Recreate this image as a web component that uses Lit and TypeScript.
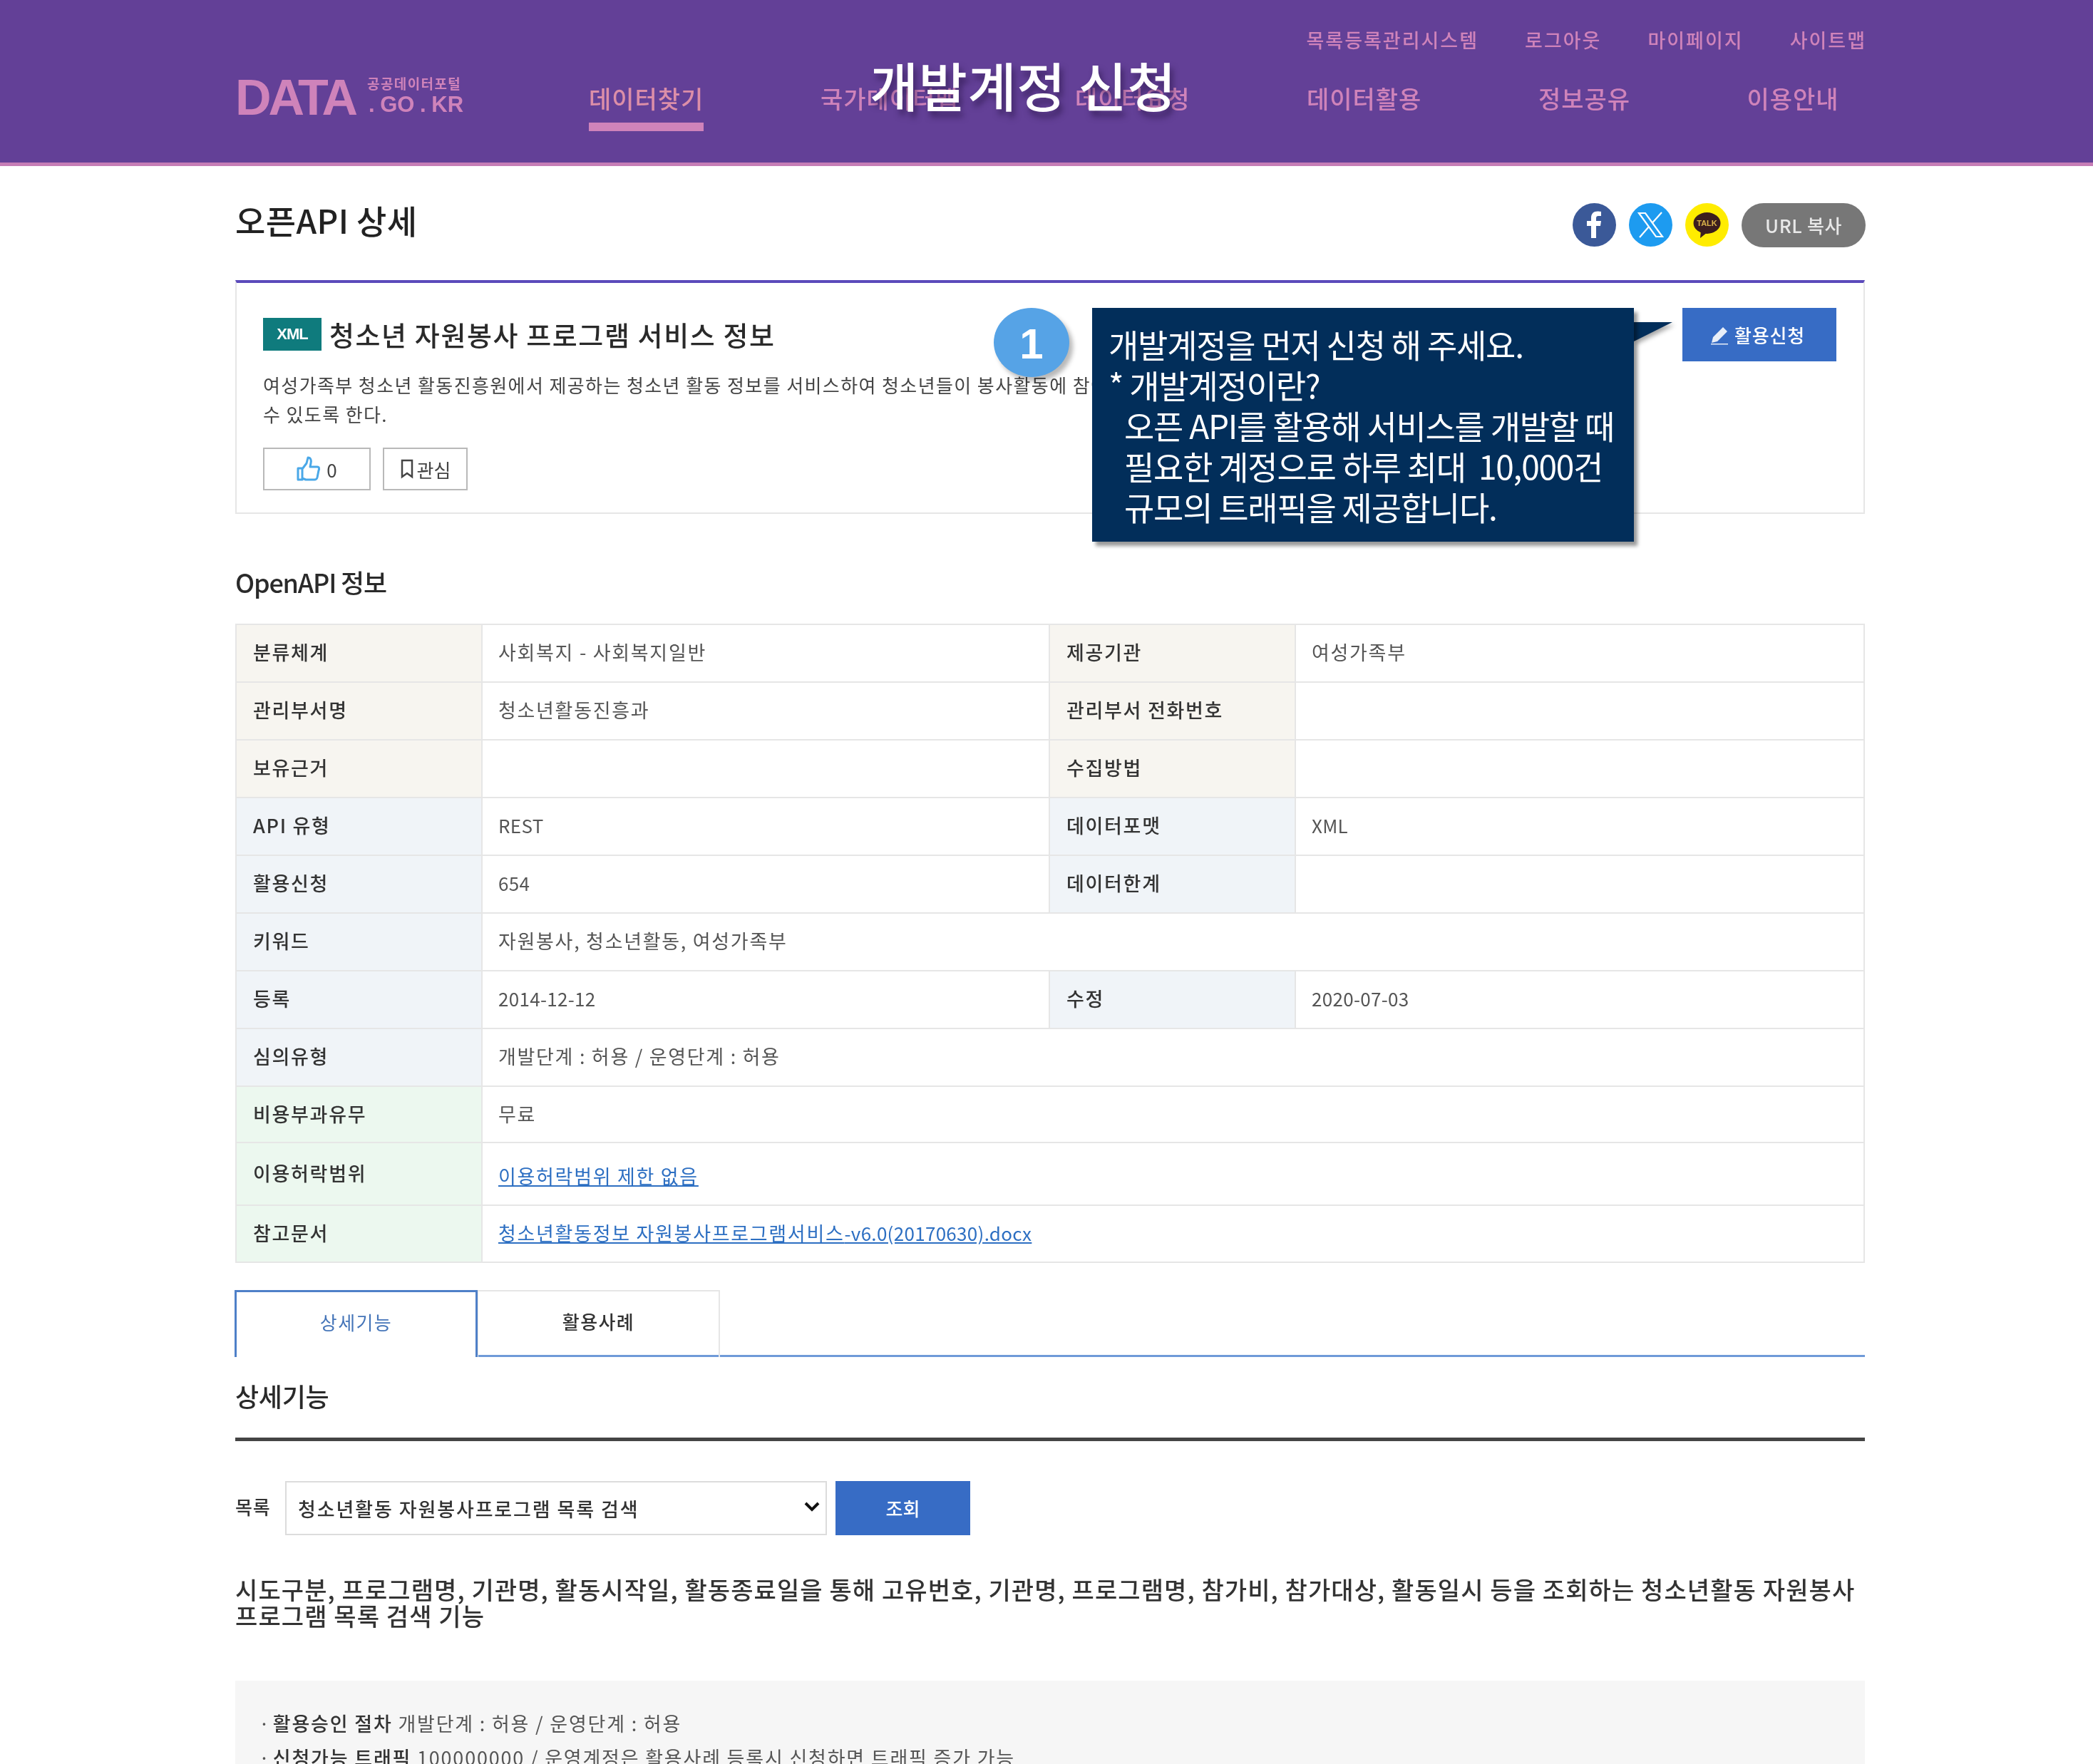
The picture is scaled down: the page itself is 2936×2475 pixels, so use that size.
import { LitElement, html, css, svg } from "lit";
import { customElement } from "lit/decorators.js";

type Cell = [string, unknown];
interface Row { tone: string; tall?: string; cells: Cell[]; }

const link = (ko: string, lat = "") => html`<a class="link" href="#">${ko}<span class="lat">${lat}</span></a>`;
const lat = (t: string) => html`<span class="lat">${t}</span>`;

const ROWS: Row[] = [
  { tone: "sand", cells: [["분류체계", "사회복지 - 사회복지일반"], ["제공기관", "여성가족부"]] },
  { tone: "sand", cells: [["관리부서명", "청소년활동진흥과"], ["관리부서 전화번호", ""]] },
  { tone: "sand", cells: [["보유근거", ""], ["수집방법", ""]] },
  { tone: "blue", cells: [["API 유형", lat("REST")], ["데이터포맷", lat("XML")]] },
  { tone: "blue", cells: [["활용신청", lat("654")], ["데이터한계", ""]] },
  { tone: "blue", cells: [["키워드", "자원봉사, 청소년활동, 여성가족부"]] },
  { tone: "blue", cells: [["등록", lat("2014-12-12")], ["수정", lat("2020-07-03")]] },
  { tone: "blue", cells: [["심의유형", "개발단계 : 허용 / 운영단계 : 허용"]] },
  { tone: "green", tall: "h79", cells: [["비용부과유무", "무료"]] },
  { tone: "green", tall: "h88", cells: [["이용허락범위", link("이용허락범위 제한 없음")]] },
  { tone: "green", tall: "h80", cells: [["참고문서", link("청소년활동정보 자원봉사프로그램서비스", "-v6.0(20170630).docx")]] },
];

const fbIcon = svg`<path fill="#fff" d="M33 49V32h6l1-7h-7v-4c0-2 1-3 3-3h4v-6c-1 0-3-.4-5-.4-5.500 0-9 3.300-9 9V25h-6v7h6v17z"/>`;
const xIcon = svg`<path fill="none" stroke="#fff" stroke-width="2.200" d="M14 14h9l24 33h-9zM46 13 33.500 27M28 33 15 48"/>`;

@customElement("app-root")
export class AppRoot extends LitElement {
  static styles = css`
    :host { display: block; }
    * { box-sizing: border-box; }
    .page {
      position: relative; height: 2475px; overflow: hidden; background: #fff;
      font-family: "Noto Sans CJK KR", "Liberation Sans", sans-serif; color: #333;
      filter: blur(0.7px);
    }
    /* header */
    .hd { height: 233px; background: #634097; border-bottom: 5px solid #c67db6; padding: 0 320px 0 330px; color: #cf83ba; }
    .util { display: flex; justify-content: flex-end; gap: 65px; height: 106px; padding-top: 38px; margin-right: -2px; font-size: 27px; line-height: 36px; letter-spacing: 2px; font-weight: 500; }
    .mainrow { display: flex; align-items: flex-start; }
    .logo { width: 496px; display: flex; gap: 17px; margin-top: -4px; font-family: "Liberation Sans", sans-serif; font-weight: 700; }
    .logo-big { font-size: 70px; line-height: 70px; letter-spacing: -4px; }
    .logo-side { display: flex; flex-direction: column; padding-top: 3px; }
    .logo-sm { font-family: "Noto Sans CJK KR", sans-serif; font-size: 19px; line-height: 24px; letter-spacing: 1.400px; white-space: nowrap; }
    .logo-kr { font-size: 31px; line-height: 30px; margin-top: 3px; padding-left: 2px; white-space: nowrap; word-spacing: -1px; }
    .nav { display: flex; gap: 163.500px; font-size: 34px; line-height: 48px; font-weight: 500; letter-spacing: 1px; }
    .nav span { display: block; height: 78px; padding-top: 8px; white-space: nowrap; }
    .nav .on { border-bottom: 12px solid #cf83ba; color: #dc8ea8; }
    .bigtitle {
      position: absolute; left: 1220px; top: 66px; font-size: 74px; line-height: 104px; font-weight: 500; color: #fff;
      letter-spacing: .7px; white-space: nowrap; text-shadow: 4px 8px 8px rgba(40, 20, 70, .6);
    }
    /* body */
    .wrap { width: 2286px; margin-left: 330px; }
    .titlerow { display: flex; justify-content: space-between; height: 160px; padding-top: 43px; }
    h1 { margin: 0; font-size: 46px; line-height: 64px; font-weight: 500; color: #222; letter-spacing: .4px; }
    .share { display: flex; align-items: flex-start; gap: 18px; margin: 9px -1px 0 0; }
    .share svg { width: 61px; height: 61px; display: block; }
    .urlbtn { width: 174px; height: 62px; border-radius: 31px; background: #777; color: #e8e8e8; font-size: 26px; font-weight: 500; line-height: 62px; text-align: center; letter-spacing: .6px; }
    .card { height: 328px; border: 2px solid #e6e6e6; border-top: 4px solid #5b4abb; padding: 49px 38px 0 37px; position: relative; }
    .card-top { display: flex; align-items: center; gap: 11px; height: 46px; }
    .badge { width: 82px; height: 46px; background: #0f7b7d; color: #fff; font: 700 22px/46px "Liberation Sans", sans-serif; text-align: center; letter-spacing: -1px; }
    .card-title { font-size: 38px; font-weight: 500; line-height: 46px; color: #2a2a2a; letter-spacing: 1.600px; white-space: nowrap; }
    .desc { margin: 27px 0 0; font-size: 26px; line-height: 41px; color: #444; letter-spacing: 1.400px; white-space: nowrap; }
    .acts { display: flex; gap: 17px; margin-top: 27px; }
    .act { height: 60px; border: 2px solid #b9b9b9; background: #fff; display: flex; align-items: center; justify-content: center; gap: 8px; font-size: 26px; color: #444; }
    .act.like { width: 151px; }
    .act.fav { width: 119px; gap: 4px; }
    .apply { position: absolute; right: 38px; top: 35px; width: 216px; height: 75px; background: #376cc5; color: #fff; display: flex; align-items: center; justify-content: center; gap: 7px; font-size: 26px; font-weight: 500; letter-spacing: .8px; padding-right: 6px; }
    .num { position: absolute; left: 1394px; top: 432px; width: 106px; height: 97px; border-radius: 50%; background: #56a3e6; color: #fff; font: 700 60px/102px "Liberation Sans", sans-serif; text-align: center; box-shadow: 5px 6px 6px rgba(0,0,0,.28); }
    .tip { position: absolute; left: 1532px; top: 432px; width: 760px; height: 328px; background: #022e5a; color: #fff; padding: 22px 0 0 23px; font-size: 46px; line-height: 57px; letter-spacing: -1.250px; box-shadow: 5px 6px 5px rgba(0,0,0,.4); white-space: nowrap; }
    .tip div.in { padding-left: 22px; }
    .tail { position: absolute; left: 2292px; top: 452px; width: 56px; height: 32px; display: block; filter: drop-shadow(3px 4px 3px rgba(0,0,0,.35)); }
    h2 { margin: 0; font-size: 36px; font-weight: 500; color: #2a2a2a; line-height: 48px; letter-spacing: -1.200px; }
    .h-info { padding-top: 71px; height: 154px; }
    table { width: 2286px; table-layout: fixed; border-collapse: collapse; border: 2px solid #e6e6e6; }
    th, td { height: 81px; border: 2px solid #e6e6e6; font-size: 27px; line-height: 34px; padding: 0 0 3px 22px; text-align: left; letter-spacing: 1.700px; }
    th { font-weight: 500; color: #333; padding-left: 23px; }
    td { font-weight: 400; color: #555; }
    th.sand { background: #f7f5f0; }
    th.blue { background: #f0f4f8; }
    th.green { background: #ecf8ef; }
    .h79 th, .h79 td { height: 79px; padding-bottom: 1px; }
    .h88 th, .h88 td { height: 88px; }
    .h88 td { padding: 5px 0 0 22px; }
    .h80 th, .h80 td { height: 80px; }
    .link { color: #2d6fc2; text-decoration: underline; }
    .lat { font-size: 26px; letter-spacing: .3px; }
    .tabs { display: flex; margin-top: 38px; height: 94px; border-bottom: 3px solid #6f9ad8; }
    .tab { width: 341px; height: 94px; text-align: center; font-size: 26px; line-height: 84px; letter-spacing: 1.400px; border: 2px solid #e6e6e6; border-bottom: 0; font-weight: 500; color: #333; }
    .tab.on { border: 3px solid #4f80c8; border-bottom: 0; height: 94px; background: #fff; color: #4474b8; font-weight: 400; position: relative; z-index: 1; margin-left: -1px; }
    .tab + .tab { margin-left: -1px; }
    .h-detail { padding-top: 30px; height: 118px; border-bottom: 5px solid #444; letter-spacing: -.3px; }
    .query { display: flex; align-items: center; margin-top: 56px; height: 76px; }
    .query label { width: 70px; font-size: 26px; color: #333; font-weight: 500; letter-spacing: .8px; margin-top: -6px; }
    .selbox { position: relative; width: 760px; height: 76px; }
    select { appearance: none; width: 100%; height: 100%; border: 2px solid #dcdcdc; background: #fff; font: inherit; font-size: 27px; color: #333; padding-left: 16px; letter-spacing: 1.900px; font-weight: 500; border-radius: 0; outline: 0; }
    .chev { position: absolute; right: 10px; top: 29px; width: 22px; height: 14px; display: block; }
    .go { width: 189px; height: 76px; margin-left: 12px; background: #376cc5; color: #fff; font-size: 26px; font-weight: 500; line-height: 76px; text-align: center; }
    .summary { margin: 57px 0 0; font-size: 34px; line-height: 37px; font-weight: 500; color: #333; letter-spacing: 1.100px; white-space: nowrap; }
    .note { margin-top: 73px; height: 200px; background: #f6f6f6; padding: 36px 0 0 33px; font-size: 27px; line-height: 48px; color: #555; letter-spacing: 1.800px; white-space: nowrap; }
    .note b { font-weight: 500; color: #333; }
    .dot { margin-right: -5px; }
  `;

  private renderRow(r: Row) {
    const single = r.cells.length === 1;
    return html`<tr class=${r.tall ?? ""}>
      ${r.cells.map(([k, v]) => html`<th class=${r.tone}>${k}</th><td colspan=${single ? 3 : 1}>${v}</td>`)}
    </tr>`;
  }

  render() {
    return html`<div class="page">
      <header class="hd">
        <div class="util"><span>목록등록관리시스템</span><span>로그아웃</span><span>마이페이지</span><span>사이트맵</span></div>
        <div class="mainrow">
          <div class="logo">
            <div class="logo-big">DATA</div>
            <div class="logo-side"><div class="logo-sm">공공데이터포털</div><div class="logo-kr">. GO . KR</div></div>
          </div>
          <nav class="nav"><span class="on">데이터찾기</span><span>국가데이터맵</span><span>데이터요청</span><span>데이터활용</span><span>정보공유</span><span>이용안내</span></nav>
        </div>
      </header>
      <div class="bigtitle">개발계정 신청</div>

      <main class="wrap">
        <div class="titlerow">
          <h1>오픈API 상세</h1>
          <div class="share">
            <svg viewBox="0 0 61 61"><circle cx="30.500" cy="30.500" r="30.500" fill="#3b5998"/>${fbIcon}</svg>
            <svg viewBox="0 0 61 61"><circle cx="30.500" cy="30.500" r="30.500" fill="#1d9bf0"/>${xIcon}</svg>
            <svg viewBox="0 0 61 61"><circle cx="30.500" cy="30.500" r="30.500" fill="#ffec00"/>
              <ellipse cx="30.500" cy="28" rx="19" ry="15" fill="#3c1e1e"/><path d="M22 38l-1 11 10-8z" fill="#3c1e1e"/>
              <text x="30.500" y="32" text-anchor="middle" font-size="11" font-weight="700" fill="#d9b24a" font-family="Liberation Sans">TALK</text></svg>
            <div class="urlbtn">URL 복사</div>
          </div>
        </div>

        <section class="card">
          <div class="card-top"><span class="badge">XML</span><span class="card-title">청소년 자원봉사 프로그램 서비스 정보</span></div>
          <p class="desc">여성가족부 청소년 활동진흥원에서 제공하는 청소년 활동 정보를 서비스하여 청소년들이 봉사활동에 참여할<br />수 있도록 한다.</p>
          <div class="acts">
            <div class="act like">
              <svg width="34" height="36" viewBox="0 0 34 36"><path fill="none" stroke="#4aa8e8" stroke-width="3" stroke-linejoin="round" d="M2 17h6v16H2zM8 18l6-8 2-8c4 0 5 4 4 8l-1 5h10c3 0 3 3 2 5l-2 10c-.5 2-2 3-4 3H13l-5-2"/></svg>
              <span>0</span>
            </div>
            <div class="act fav">
              <svg width="20" height="28" viewBox="0 0 20 28"><path fill="none" stroke="#444" stroke-width="2.500" d="M3 2h14v23l-7-5-7 5z"/></svg>
              <span>관심</span>
            </div>
          </div>
          <div class="apply">
            <svg width="28" height="28" viewBox="0 0 28 28"><path fill="#e8eef8" d="M19 3l6 6L11 23l-8 2 2-8zM2 26h24v1.500H2z"/></svg>
            <span>활용신청</span>
          </div>
        </section>

        <h2 class="h-info">OpenAPI 정보</h2>
        <table>
          <colgroup><col style="width:345px" /><col style="width:796px" /><col style="width:345px" /><col /></colgroup>
          <tbody>${ROWS.map((r) => this.renderRow(r))}</tbody>
        </table>

        <div class="tabs"><div class="tab on">상세기능</div><div class="tab">활용사례</div></div>
        <h2 class="h-detail">상세기능</h2>

        <div class="query">
          <label>목록</label>
          <div class="selbox">
            <select><option>청소년활동 자원봉사프로그램 목록 검색</option></select>
            <svg class="chev" viewBox="0 0 22 14"><path fill="none" stroke="#111" stroke-width="4" d="M2 2l9 9 9-9"/></svg>
          </div>
          <div class="go">조회</div>
        </div>

        <p class="summary">시도구분, 프로그램명, 기관명, 활동시작일, 활동종료일을 통해 고유번호, 기관명, 프로그램명, 참가비, 참가대상, 활동일시 등을 조회하는 청소년활동 자원봉사<br />프로그램 목록 검색 기능</p>

        <div class="note">
          <div><span class="dot">·</span> <b>활용승인 절차</b> 개발단계 : 허용 / 운영단계 : 허용</div>
          <div><span class="dot">·</span> <b>신청가능 트래픽</b> 100000000 / 운영계정은 활용사례 등록시 신청하면 트래픽 증가 가능</div>
        </div>
      </main>

      <div class="num">1</div>
      <svg class="tail" viewBox="0 0 56 32"><path fill="#022e5a" d="M0 0h54L0 27z"/></svg>
      <div class="tip">
        <div>개발계정을 먼저 신청 해 주세요.</div>
        <div>* 개발계정이란?</div>
        <div class="in">오픈 API를 활용해 서비스를 개발할 때</div>
        <div class="in">필요한 계정으로 하루 최대&nbsp; 10,000건</div>
        <div class="in">규모의 트래픽을 제공합니다.</div>
      </div>
    </div>`;
  }
}
